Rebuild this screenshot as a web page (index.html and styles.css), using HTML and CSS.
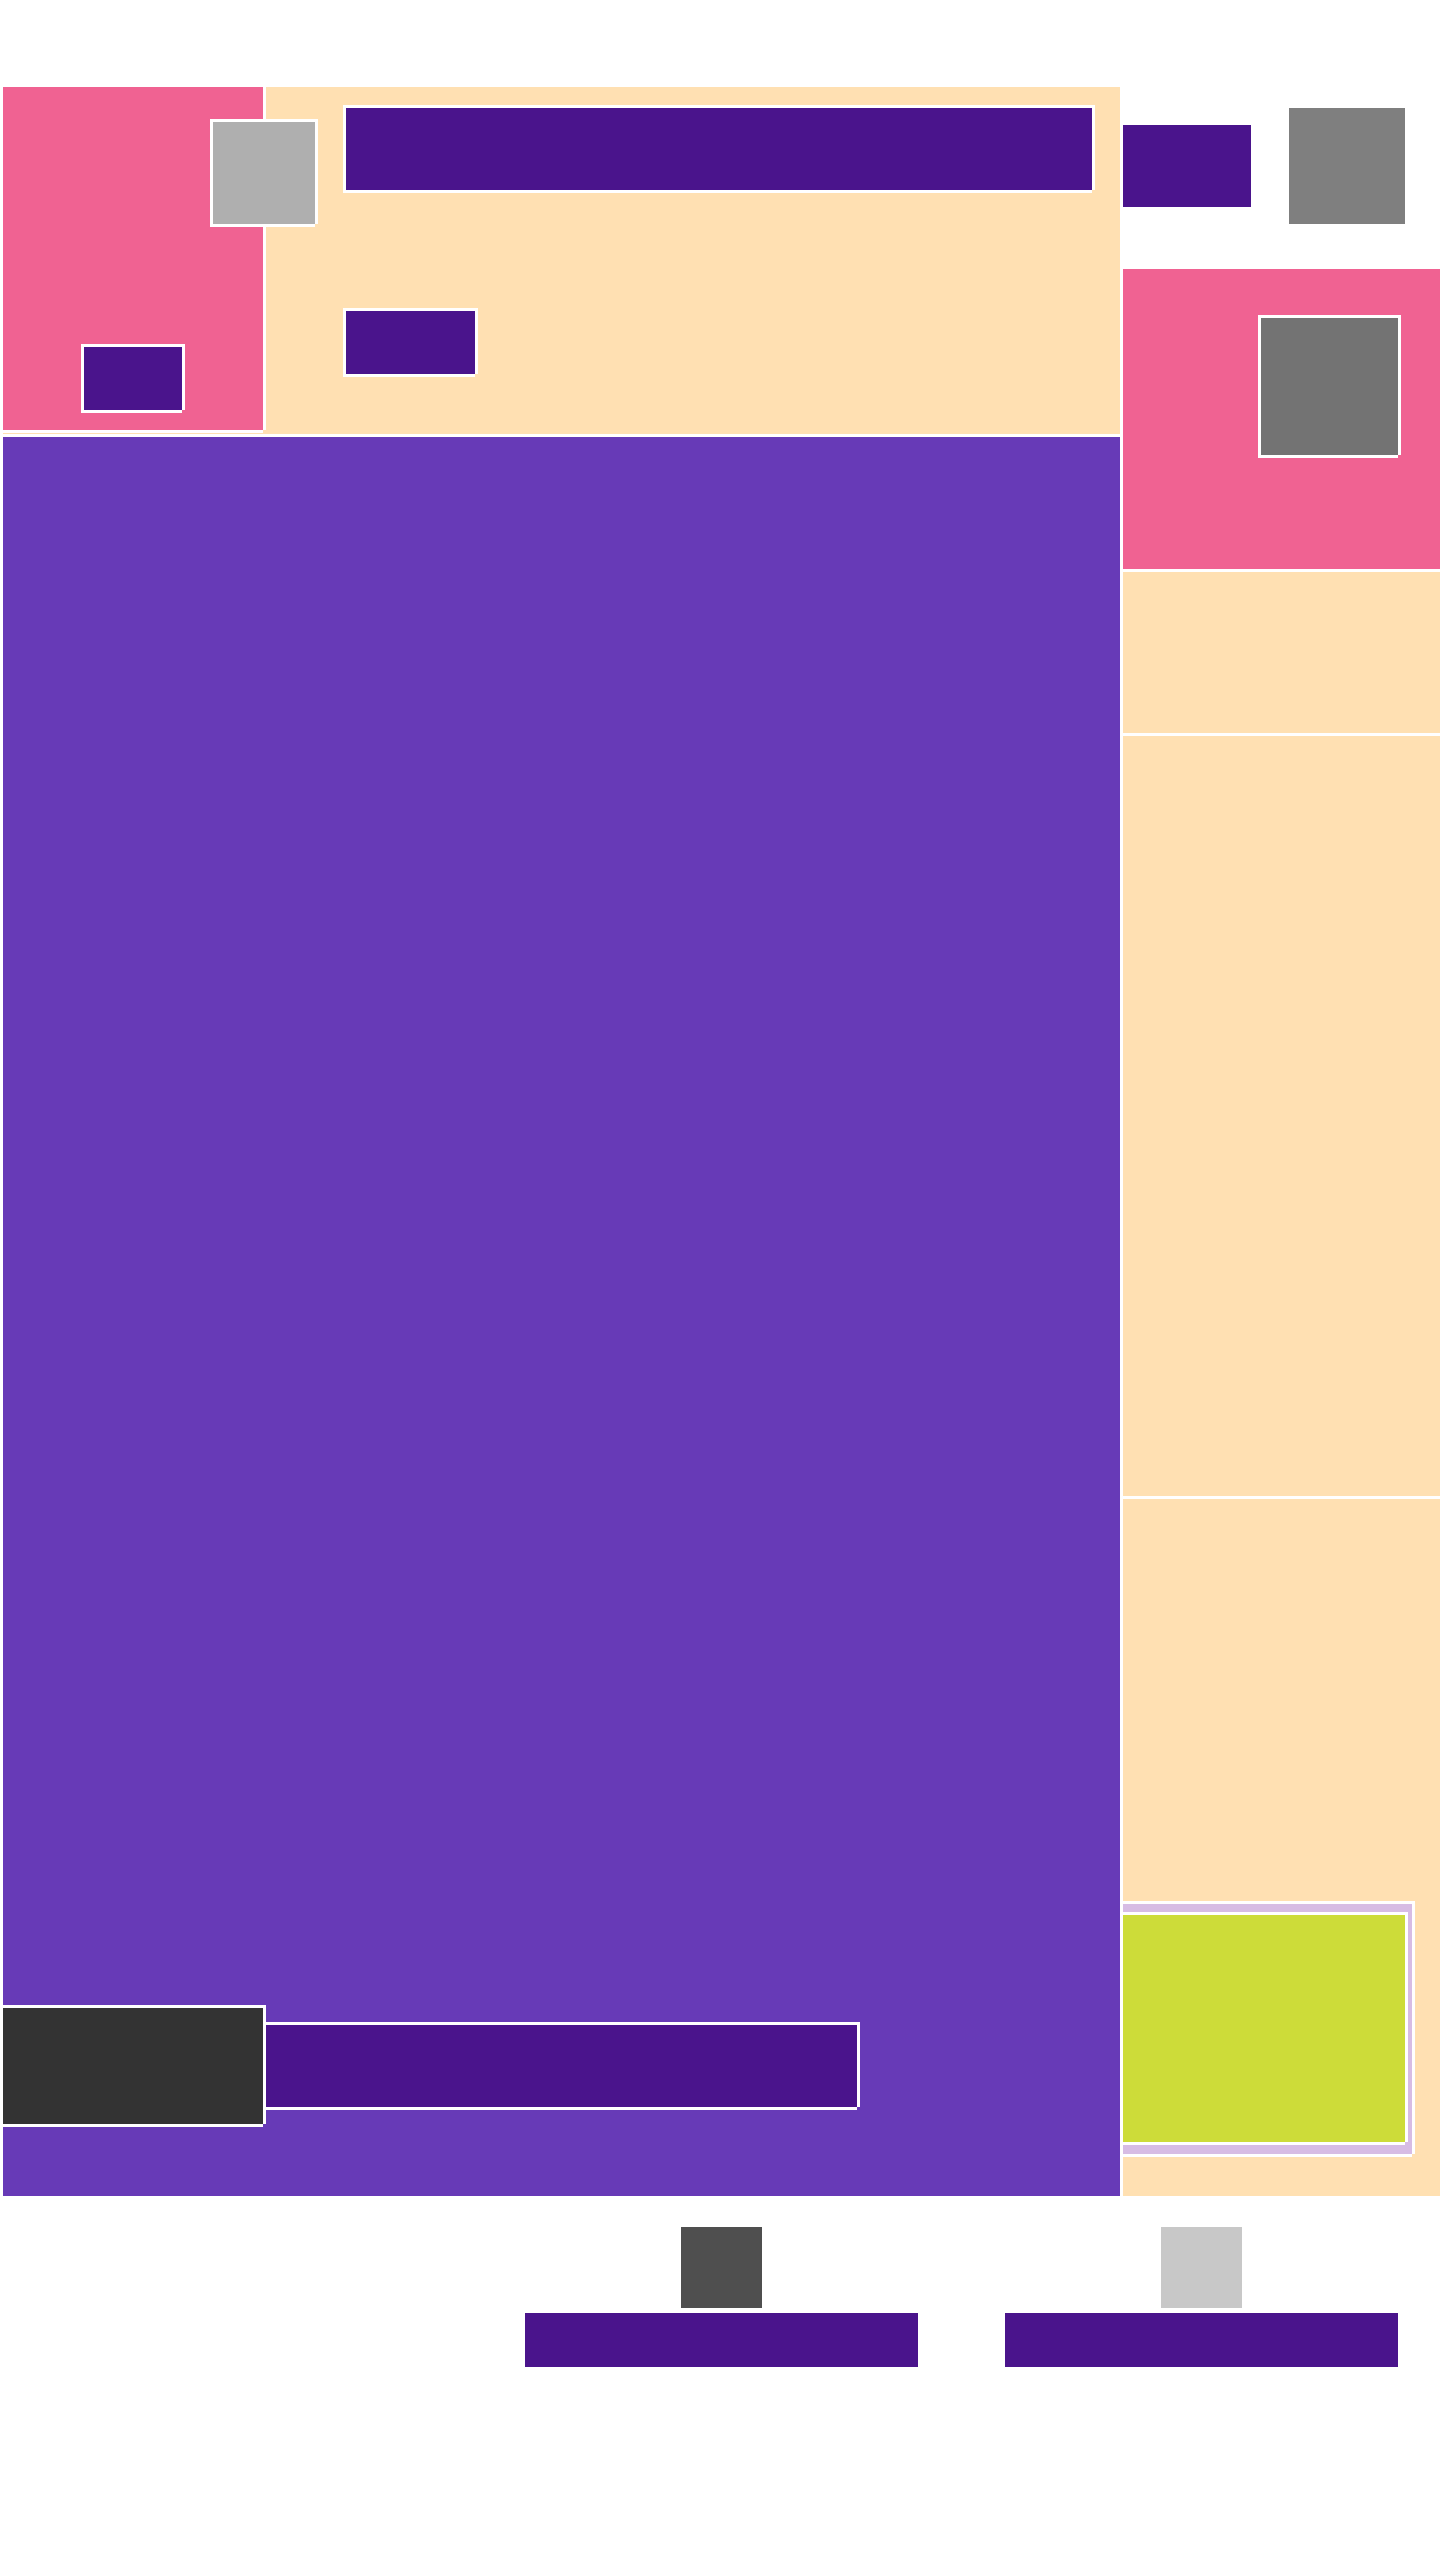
FILE: index.html
```html
<!DOCTYPE html>
<html lang="en">
<head>
    <meta charset="UTF-8">
    <meta name="viewport" content="width=device-width, initial-scale=1.0">
    <title>Layout</title>
    <link rel="stylesheet" href="styles.css">
</head>
<body>
    <div class="page">
        <div class="left-col">
            <header class="header">
                <div class="header-side framed">
                    <div class="side-tag framed"></div>
                </div>
                <div class="avatar framed"></div>
                <div class="header-body">
                    <div class="title-bar framed"></div>
                    <div class="header-btn framed"></div>
                </div>
            </header>
            <main class="main">
                <div class="main-row">
                    <div class="main-thumb framed"></div>
                    <div class="main-bar framed"></div>
                </div>
            </main>
        </div>

        <aside class="right-col">
            <div class="strip">
                <div class="strip-bar"></div>
                <div class="strip-icon"></div>
            </div>
            <div class="side-card">
                <div class="side-photo framed"></div>
            </div>
            <div class="side-section short"></div>
            <div class="side-section tall"></div>
            <div class="side-section last">
                <div class="promo framed">
                    <div class="promo-inner framed"></div>
                </div>
            </div>
        </aside>
    </div>

    <footer class="footer">
        <div class="footer-col"></div>
        <div class="footer-col">
            <div class="footer-icon dark"></div>
            <div class="footer-bar"></div>
        </div>
        <div class="footer-col">
            <div class="footer-icon light"></div>
            <div class="footer-bar"></div>
        </div>
    </footer>
</body>
</html>
```

FILE: styles.css
```css
* {
    box-sizing: border-box;
}
body {
    margin: 0;
    padding: 87px 0 0 3px;
    background-color: #fff;
    font-family: "Liberation Sans", Arial, sans-serif;
}
/* white 3px frame, drawn outside the box */
.framed {
    box-shadow: -3px -3px 0 #fff, 3px -3px 0 #fff, -3px 3px 0 #fff, 3px 0 0 #fff, 0 3px 0 #fff;
}
.page {
    display: flex;
    gap: 3px;
}
.left-col {
    width: 1117px;
    display: flex;
    flex-direction: column;
    gap: 3px;
}

/* header */
.header {
    position: relative;
    height: 347px;
    display: flex;
    align-items: flex-start;
    background-color: #FFE0B2;
}
.header-side {
    width: 260px;
    height: 343px;
    display: flex;
    flex-direction: column;
    justify-content: flex-end;
    align-items: center;
    padding-bottom: 20px;
    background-color: #F06292;
}
.side-tag {
    width: 98px;
    height: 63px;
    background-color: #4A148C;
}
.avatar {
    position: absolute;
    left: 210px;
    top: 35px;
    width: 102px;
    height: 102px;
    background-color: #AFAFAF;
}
.header-body {
    flex: 1;
    display: flex;
    flex-direction: column;
    align-items: flex-start;
    padding: 21px 0 0 83px;
}
.title-bar {
    width: 746px;
    height: 82px;
    background-color: #4A148C;
}
.header-btn {
    width: 129px;
    height: 63px;
    margin-top: 121px;
    background-color: #4A148C;
}

/* main area */
.main {
    height: 1759px;
    display: flex;
    flex-direction: column;
    justify-content: flex-end;
    padding-bottom: 72px;
    background-color: #673AB7;
}
.main-row {
    display: flex;
    align-items: center;
    gap: 3px;
}
.main-thumb {
    width: 260px;
    height: 116px;
    background-color: #333;
}
.main-bar {
    width: 591px;
    height: 82px;
    background-color: #4A148C;
}

/* right column */
.right-col {
    flex: 1;
    display: flex;
    flex-direction: column;
    gap: 3px;
}
.strip {
    height: 182px;
    display: flex;
    align-items: center;
    padding-bottom: 24px;
    margin-bottom: -3px;
}
.strip-bar {
    width: 128px;
    height: 82px;
    background-color: #4A148C;
}
.strip-icon {
    width: 116px;
    height: 116px;
    margin-left: 38px;
    background-color: #7F7F7F;
}
.side-card {
    height: 300px;
    display: flex;
    justify-content: flex-end;
    align-items: flex-start;
    padding: 49px 42px 0 0;
    background-color: #F06292;
}
.side-photo {
    width: 137px;
    height: 137px;
    background-color: #737373;
}
.side-section {
    background-color: #FFE0B2;
}
.side-section.short {
    height: 161px;
}
.side-section.tall {
    height: 760px;
}
.side-section.last {
    height: 697px;
    padding-top: 405px;
}
.promo {
    width: 289px;
    height: 250px;
    padding: 11px 7px 12px 0;
    background-color: #D7BCE4;
}
.promo-inner {
    width: 100%;
    height: 100%;
    background-color: #CDDC39;
}

/* footer */
.footer {
    display: grid;
    grid-template-columns: repeat(3, 393px);
    gap: 87px;
    padding: 0 42px;
    margin-top: 31px;
}
.footer-col {
    display: flex;
    flex-direction: column;
    align-items: center;
    gap: 5px;
}
.footer-icon {
    width: 81px;
    height: 81px;
}
.footer-icon.dark {
    background-color: #4F4F4F;
}
.footer-icon.light {
    background-color: #C8C8C8;
}
.footer-bar {
    width: 393px;
    height: 54px;
    background-color: #4A148C;
}
```
